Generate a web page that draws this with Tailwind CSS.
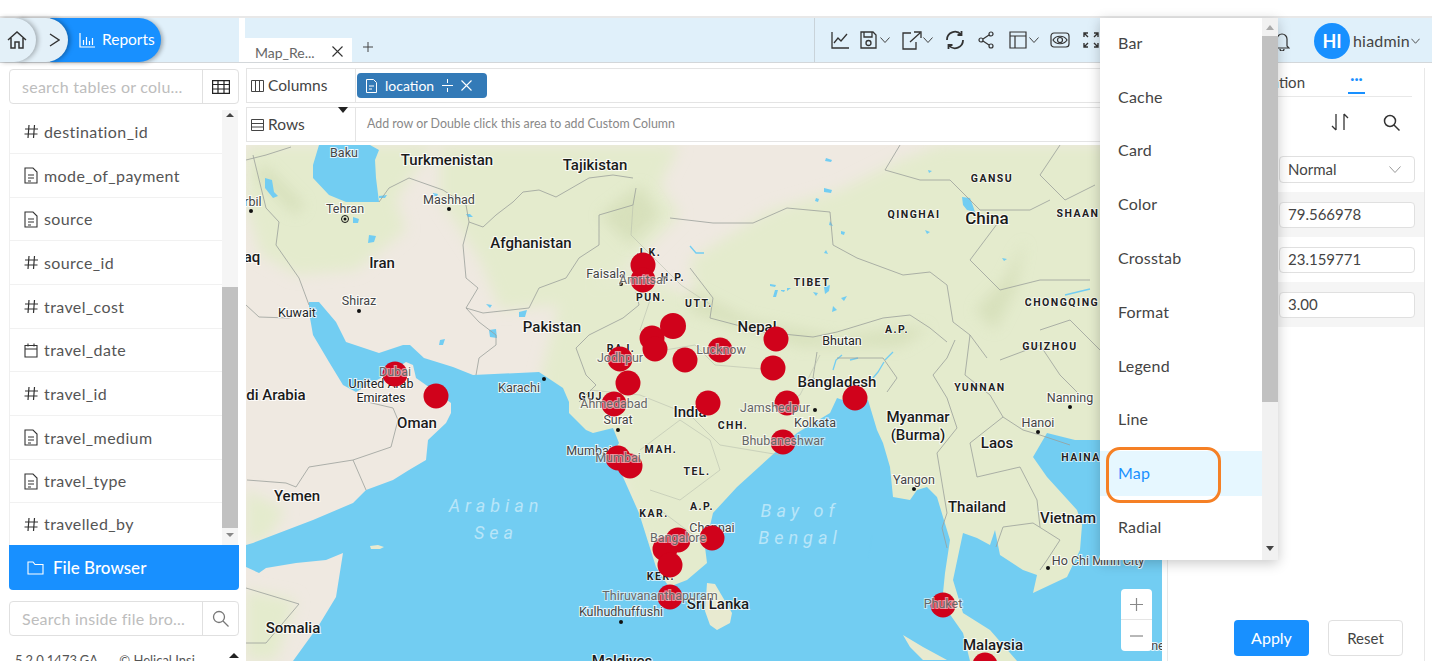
<!DOCTYPE html>
<html lang="en">
<head>
<meta charset="UTF-8">
<title>Reports - Map</title>
<script src="https://cdn.jsdelivr.net/npm/@tailwindcss/browser@4"></script>
</head>
<body class="relative w-[1432px] h-[661px] overflow-hidden bg-white font-['Lato',sans-serif] text-[#555]">

<div class="h-[18px] border-b-2 border-[#e8e8e8]"></div>

<!-- top bar -->
<header class="flex h-[45px] border-b border-[#d3d7da]">
  <div class="w-[239px] bg-[#e0f0fa] flex items-center">
    <div class="relative z-20 w-[36px] h-[44px] rounded-r-full bg-[#e3f0f8] shadow-[2px_0_5px_rgba(0,0,0,.3)] flex items-center pl-[7px]">
      <svg class="w-[20px] h-[20px]" viewBox="0 0 20 20" fill="none" stroke="#333" stroke-width="1.5"><path d="M1 10 10 2l9 8M4 8v10h4v-6h4v6h4V8"/></svg>
    </div>
    <div class="relative z-10 -ml-[18px] w-[50px] h-[44px] rounded-r-full bg-[#e3f0f8] shadow-[2px_0_5px_rgba(0,0,0,.35)] flex items-center pl-[31px]">
      <svg class="w-[11px] h-[14px]" viewBox="0 0 11 14" fill="none" stroke="#333" stroke-width="1.4"><path d="m1 1 9 6-9 6"/></svg>
    </div>
    <div class="-ml-[18px] w-[111px] h-[44px] rounded-r-full bg-[#1890ff] shadow-[2px_1px_4px_rgba(0,0,0,.3)] flex items-center pl-[29px] gap-[7px] text-white text-[15.5px]">
      <svg class="w-[16px] h-[15px]" viewBox="0 0 16 15" fill="none" stroke="#fff" stroke-width="1.2"><path d="M1 0v14h15M4.500 12V7M7.500 12V4M10.500 12V8M13.500 12V5"/></svg>
      <span>Reports</span>
    </div>
  </div>
  <div class="w-[6px]"></div>
  <div class="flex-1 bg-[#e0f0fa] flex relative">
    <div class="w-[107px] h-[24px] mt-[20px] bg-white flex items-center pt-[4px] pl-[10px] pr-[9px] justify-between text-[14px] text-[#666]">
      <span>Map_Re...</span>
      <svg class="w-[11px] h-[11px] -mt-[2px]" viewBox="0 0 11 11" stroke="#333" stroke-width="1.1"><path d="m.5.5 10 10M10.5.5l-10 10"/></svg>
    </div>
    <div class="w-[18px] h-[18px] mt-[20px] ml-[7px] flex items-center justify-center">
      <svg class="w-[10px] h-[10px]" viewBox="0 0 10 10" stroke="#444" stroke-width="1"><path d="M5 0v10M0 5h10"/></svg>
    </div>
    <div class="ml-[437px] w-px h-full bg-[#c9d3d9]"></div>
    <div class="flex items-center h-full pl-[16px]">
      <svg class="w-[18px] h-[18px]" viewBox="0 0 18 18" fill="none" stroke="#333" stroke-width="1.3"><path d="M1 1v16h17M3 12l4-5 3 3 6-7"/></svg>
      <svg class="ml-[11px] w-[17px] h-[18px]" viewBox="0 0 17 18" fill="none" stroke="#333" stroke-width="1.3"><path d="M1 1h12l3 3v13H1zM4 1v5h8V1"/><circle cx="8.5" cy="12" r="2.5"/></svg>
      <svg class="ml-[3px] w-[10px] h-[6px]" viewBox="0 0 10 6" fill="none" stroke="#444"><path d="m.5.5 4.5 5 4.5-5"/></svg>
      <svg class="ml-[12px] w-[20px] h-[19px]" viewBox="0 0 20 19" fill="none" stroke="#333" stroke-width="1.3"><path d="M9 2H1v16h13v-7M8 11l10-9M12 1h7v6"/></svg>
      <svg class="ml-[1px] w-[10px] h-[6px]" viewBox="0 0 10 6" fill="none" stroke="#444"><path d="m.5.5 4.5 5 4.5-5"/></svg>
      <svg class="ml-[12px] w-[20px] h-[20px]" viewBox="0 0 20 20" fill="none" stroke="#333" stroke-width="1.8"><path d="M2 10a8 8 0 0 1 14-5.500M18 10a8 8 0 0 1-14 5.500M16.500 1v4h-4M3.500 19v-4h4"/></svg>
      <svg class="ml-[13px] w-[16px] h-[18px]" viewBox="0 0 16 18" fill="none" stroke="#333" stroke-width="1.2"><circle cx="13" cy="3" r="2"/><circle cx="3" cy="9" r="2"/><circle cx="13" cy="15" r="2"/><path d="m5 8 6-4M5 10l6 4"/></svg>
      <svg class="ml-[15px] w-[18px] h-[18px]" viewBox="0 0 18 18" fill="none" stroke="#333" stroke-width="1.2"><path d="M1 1h16v16H1zM1 5h16M6 5v12"/></svg>
      <svg class="ml-[2px] w-[10px] h-[6px]" viewBox="0 0 10 6" fill="none" stroke="#444"><path d="m.5.5 4.5 5 4.5-5"/></svg>
      <svg class="ml-[11px] w-[20px] h-[16px]" viewBox="0 0 20 16" fill="none" stroke="#333" stroke-width="1.2"><rect x="1" y="1" width="18" height="14" rx="3"/><path d="M3 8c3-5 11-5 14 0-3 5-11 5-14 0z"/><circle cx="10" cy="8" r="2.5"/></svg>
      <svg class="ml-[13px] w-[16px] h-[16px]" viewBox="0 0 16 16" fill="none" stroke="#333" stroke-width="1.4"><path d="M1 5V1h4M11 1h4v4M1 11v4h4M11 15h4v-4M1 1l4 4M15 1l-4 4M1 15l4-4M15 15l-4-4"/></svg>
    </div>
    <div class="absolute right-[12px] top-[5px] flex items-center">
      <svg class="mr-[24px] w-[16px] h-[20px]" viewBox="0 0 16 20" fill="none" stroke="#333" stroke-width="1.2"><path d="M3 15V8a5 5 0 0 1 10 0v7l2 2H1zM6 18a2 2 0 0 0 4 0"/></svg>
      <div class="w-[36px] h-[36px] rounded-full bg-[#1890ff] text-white font-bold text-[18px] flex items-center justify-center">HI</div>
      <span class="ml-[3px] text-[16px] tracking-[.2px] text-[#444]">hiadmin</span>
      <svg class="ml-[1px] w-[9px] h-[6px]" viewBox="0 0 10 6" fill="none" stroke="#444"><path d="m.5.5 4.5 5 4.500-5"/></svg>
    </div>
  </div>
</header>

<main class="flex h-[598px]">
  <!-- left column -->
  <aside class="w-[246px] pl-[9px] pr-[7px] pt-[6px] flex flex-col">
    <div class="shrink-0 flex h-[35px] border border-[#e0e0e0] rounded-sm">
      <div class="flex-1 flex items-center pl-[12px] text-[16px] tracking-[.25px] text-[#bdbdbd] whitespace-nowrap">search tables or colu...</div>
      <div class="w-[36px] border-l border-[#e0e0e0] flex items-center justify-center">
        <svg class="w-[18px] h-[14px]" viewBox="0 0 18 14" fill="none" stroke="#222" stroke-width="1.2"><path d="M.6.6h16.800v12.800H.6zM.6 4.500h16.800M.6 9h16.800M6 .6v12.800M12 .6v12.800"/></svg>
      </div>
    </div>
    <div class="shrink-0 mt-[6px] h-[435px] flex border-l border-[#efefef]">
      <ul class="w-[212px] text-[16px] tracking-[.4px] text-[#555]">
        <li class="h-[44px] flex items-center gap-[6px] pl-[14px] border-b border-[#f1f1f1]"><svg class="w-[14px] h-[15px]" viewBox="0 0 14 15" fill="none" stroke="#333" stroke-width="1.2"><path d="M5 1 4 14M10.500 1l-1 13M1 5h13M.5 10h13"/></svg>destination_id</li>
        <li class="h-[44px] flex items-center gap-[6px] pl-[14px] border-b border-[#f1f1f1]"><svg class="w-[14px] h-[17px]" viewBox="0 0 14 17" fill="none" stroke="#333" stroke-width="1.1"><path d="M1 1h8l4 4v11H1zM4 8h6M4 11h6M4 14h3"/></svg>mode_of_payment</li>
        <li class="h-[43px] flex items-center gap-[6px] pl-[14px] border-b border-[#f1f1f1]"><svg class="w-[14px] h-[17px]" viewBox="0 0 14 17" fill="none" stroke="#333" stroke-width="1.1"><path d="M1 1h8l4 4v11H1zM4 8h6M4 11h6M4 14h3"/></svg>source</li>
        <li class="h-[44px] flex items-center gap-[6px] pl-[14px] border-b border-[#f1f1f1]"><svg class="w-[14px] h-[15px]" viewBox="0 0 14 15" fill="none" stroke="#333" stroke-width="1.2"><path d="M5 1 4 14M10.500 1l-1 13M1 5h13M.5 10h13"/></svg>source_id</li>
        <li class="h-[44px] flex items-center gap-[6px] pl-[14px] border-b border-[#f1f1f1]"><svg class="w-[14px] h-[15px]" viewBox="0 0 14 15" fill="none" stroke="#333" stroke-width="1.2"><path d="M5 1 4 14M10.500 1l-1 13M1 5h13M.5 10h13"/></svg>travel_cost</li>
        <li class="h-[43px] flex items-center gap-[6px] pl-[14px] border-b border-[#f1f1f1]"><svg class="w-[14px] h-[15px]" viewBox="0 0 14 15" fill="none" stroke="#333" stroke-width="1.1"><path d="M1 2.500h12V14H1zM1 6h12M4 .5v3M10 .5v3"/></svg>travel_date</li>
        <li class="h-[44px] flex items-center gap-[6px] pl-[14px] border-b border-[#f1f1f1]"><svg class="w-[14px] h-[15px]" viewBox="0 0 14 15" fill="none" stroke="#333" stroke-width="1.2"><path d="M5 1 4 14M10.500 1l-1 13M1 5h13M.5 10h13"/></svg>travel_id</li>
        <li class="h-[44px] flex items-center gap-[6px] pl-[14px] border-b border-[#f1f1f1]"><svg class="w-[14px] h-[17px]" viewBox="0 0 14 17" fill="none" stroke="#333" stroke-width="1.1"><path d="M1 1h8l4 4v11H1zM4 8h6M4 11h6M4 14h3"/></svg>travel_medium</li>
        <li class="h-[43px] flex items-center gap-[6px] pl-[14px] border-b border-[#f1f1f1]"><svg class="w-[14px] h-[17px]" viewBox="0 0 14 17" fill="none" stroke="#333" stroke-width="1.1"><path d="M1 1h8l4 4v11H1zM4 8h6M4 11h6M4 14h3"/></svg>travel_type</li>
        <li class="h-[42px] flex items-center gap-[6px] pl-[14px]"><svg class="w-[14px] h-[15px]" viewBox="0 0 14 15" fill="none" stroke="#333" stroke-width="1.2"><path d="M5 1 4 14M10.500 1l-1 13M1 5h13M.5 10h13"/></svg>travelled_by</li>
      </ul>
      <div class="w-[16px] bg-[#f5f5f5] flex flex-col items-center">
        <div class="mt-[3px] w-0 h-0 border-x-[4px] border-x-transparent border-b-[4px] border-b-[#444]"></div>
        <div class="mt-[170px] w-full h-[241px] bg-[#c1c1c1]"></div>
        <div class="mt-[5px] w-0 h-0 border-x-[4px] border-x-transparent border-t-[4px] border-t-[#888]"></div>
      </div>
    </div>
    <div class="shrink-0 h-[45px] bg-[#1890ff] rounded-b-sm flex items-center pl-[18px] gap-[9px] text-white text-[17px] font-medium">
      <svg class="w-[17px] h-[14px]" viewBox="0 0 17 14" fill="none" stroke="#fff" stroke-width="1.1"><path d="M1 13V1h5l2 2.500h8V13z"/></svg>
      File Browser
    </div>
    <div class="shrink-0 mt-[11px] flex h-[35px] border border-[#e0e0e0] rounded-sm">
      <div class="flex-1 flex items-center pl-[12px] text-[16px] tracking-[.25px] text-[#bdbdbd] whitespace-nowrap">Search inside file bro...</div>
      <div class="w-[36px] border-l border-[#e0e0e0] flex items-center justify-center">
        <svg class="w-[17px] h-[17px]" viewBox="0 0 17 17" fill="none" stroke="#777" stroke-width="1.3"><circle cx="7" cy="7" r="5.500"/><path d="m11 11 5.500 5.500"/></svg>
      </div>
    </div>
    <div class="shrink-0 mt-[15px] h-[20px] flex items-center pl-[6px] text-[13px] text-[#555] whitespace-nowrap">
      <span class="w-[109px]">5.2.0.1473.GA</span><span>© Helical Insi...</span>
      <div class="ml-[25px] -mt-[12px] w-0 h-0 border-x-[5px] border-x-transparent border-b-[5px] border-b-[#222]"></div>
    </div>
  </aside>

  <!-- centre column -->
  <section class="w-[921px] flex flex-col pt-[5px] pr-[5px]">
    <div class="shrink-0 h-[35px] flex border border-[#e4e4e4] text-[15.5px] text-[#444]">
      <div class="w-[109px] flex items-center pl-[4px] gap-[4px] border-r border-[#e4e4e4]">
        <svg class="w-[13px] h-[12px]" viewBox="0 0 13 12" fill="none" stroke="#444"><path d="M.5.5h12v11H.5zM4.500.5v11M8.500.5v11"/></svg>
        Columns
      </div>
      <div class="ml-px mt-[4px] w-[130px] h-[25px] rounded-sm bg-[#337ab7] flex items-center pl-[9px] text-[14px] text-white">
        <svg class="w-[11px] h-[14px]" viewBox="0 0 11 14" fill="none" stroke="#fff"><path d="M.5.5h7l3 3v10H.5zM3 7h5M3 10h3"/></svg>
        <span class="ml-[8px]">location</span>
        <svg class="ml-[8px] w-[11px] h-[13px]" viewBox="0 0 11 13" fill="none" stroke="#fff"><path d="M0 6.500h11M5.500 0v4M5.500 9v4"/></svg>
        <svg class="ml-[8px] w-[11px] h-[11px]" viewBox="0 0 11 11" stroke="#fff" stroke-width="1.1"><path d="m.5.5 10 10M10.500.5l-10 10"/></svg>
      </div>
    </div>
    <div class="shrink-0 relative mt-[4px] h-[35px] flex border border-[#e4e4e4] text-[15.5px] text-[#444]">
      <div class="w-[109px] flex items-center pl-[4px] gap-[4px] border-r border-[#e4e4e4]">
        <svg class="w-[13px] h-[12px]" viewBox="0 0 13 12" fill="none" stroke="#444"><path d="M.5.5h12v11H.5zM.5 4.500h12M.5 8h12"/></svg>
        Rows
      </div>
      <div class="pl-[11px] flex items-center text-[12.4px] text-[#888]">Add row or Double click this area to add Custom Column</div>
      <div class="absolute left-[91px] -top-px w-0 h-0 border-x-[5.5px] border-x-transparent border-t-[6px] border-t-[#222]"></div>
    </div>

    <!-- map -->
    <div class="relative shrink-0 mt-[3px] w-[916px] h-[516px] overflow-hidden">
      <svg class="block w-[916px] h-[516px] font-['Roboto',sans-serif]" viewBox="246 145 916 516">
        <defs><filter id="soft"><feGaussianBlur stdDeviation="7"/></filter></defs>
        <rect x="246" y="145" width="916" height="516" fill="#efe9e1"/>
        <!-- vegetation -->
        <g fill="#e4ebcd" filter="url(#soft)">
          <path d="M246 145h190l-20 25-20 30 10 30-50 40-60 5-35-20-15-50z"/>
          <path d="M440 145h240l-20 40 20 30-50 50-70 40-60 5-20-50-40-60z"/>
          <path d="M560 300l70-30 70 30 110 40 40 40 50 40-60 60-70 40-40 40-20 60h-40l-30-80-20-70-60-40-20-50z"/>
          <path d="M690 260l80-50 70-20 60-30 40-15h220v310l-50 60-40 90-60 40-60 60-30-60-30-100-30-60-60-90-100-60z"/>
          <path d="M246 590l50 10-20 60h-30zM246 490l40 20-20 30-20 5z"/>
          <path d="M880 400h220v280H900z"/>
          <path d="M620 480h100l-10 120h-50z"/>
        </g>
        <g fill="#cdd8ae" opacity=".55" filter="url(#soft)">
          <path d="M690 290l60 30 90 18 60-10 30 0-30 18-100 0-110-35z"/>
          <path d="M975 310l30-30 20-40-10 50-20 40z"/>
          <path d="M600 215l40-30 20 30-30 30z"/>
          <path d="M265 165l40 40-10 10-40-40z"/>
        </g>
        <!-- sea -->
        <path fill="#72cdf2" d="M319 145L370 145L379 150L375 160L376 178L379 202L346 202L329 195L313 178L313 165Z"/>
        <path fill="#72cdf2" d="M309 302L319 302L336 322L346 342L379 353L403 345L410 345L424 358L453 367L473 375L539 372L563 388L569 402L569 413L586 430L593 433L613 428L619 443L616 448L623 477L639 513L656 567L669 587L687 580L707 563L705 547L713 513L737 487L770 457L797 433L830 413L837 398L857 405L868 400L877 430L883 443L890 467L893 497L910 500L917 490L927 487L937 497L943 517L950 540L945 573L942 603L963 633L970 661L293 661L319 625L336 597L343 553L326 560L296 563L266 568L259 573L246 567L246 545L253 543L313 520L353 503L366 490L393 480L409 470L426 460L428 440L446 423L451 413L451 403L436 392L416 378L413 365L406 362L386 375L356 392L343 385L329 362L313 335L309 312Z"/>
        <path fill="#72cdf2" d="M1017 661L990 630L963 613L953 580L960 547L963 533L977 538L990 545L995 530L1000 555L1023 570L1037 575L1033 593L1067 577L1080 550L1082 525L1077 510L1047 477L1033 457L1047 433L1075 440L1100 440L1162 445L1162 661Z"/>
        <path fill="#e8ead0" d="M707 583l8 1 17 29-2 10-13 7-7-5-5-14zM903 635l20 12 24 13h-24l-13-13zM370 546l8-1 6 2-4 2h-9z"/>
        <!-- lakes -->
        <g fill="#72cdf2">
          <path d="M265 178l7 2 2 12 4 4-5 2-8-10zM353 217l6 2-1 4-5 0zM369 235l7 1-2 6-6 1zM433 193l5 1-1 2-4 0zM379 196l8-1-2 3-6 0zM470 214l-4 0 2 3 5 0zM492 305l-6-1 4 4zM519 312l8-2-2 7-6 0zM489 330l7-1 1 9-7-1zM440 340l5-1-2 6-4 0z"/>
          <path d="M962 197l8 1 3 8 2 6-8-2-4-5zM826 158l6 2-1 2-6-1zM824 188l8 2-1 3-7-1zM816 198l3 1-1 3-3-1zM824 287l6-2-1 6-4 3zM770 284l6 1-1 2-5-1zM781 290l4 0-1 2-3-1zM778 290l-2 7-3 0 2-7zM787 288l4 0-4 3zM813 292l5 1-2 3zM841 298l6-2-3 5zM833 306l4 4-5 2zM841 231l4 1-1 3-3-1zM830 221l3 5-4-1zM826 250l2 4-4-1zM925 230l5 2-3 2zM928 170l4 1-3 2zM1002 258l5 1-3 2z"/>
        </g>
        <g fill="none" stroke="#72cdf2" stroke-width="1.3">
          <path d="M833 370l3-10 6-5M850 360l8-2M884 362l-6 10-5 6M893 352l-8 8M1065 295l25-6"/>
          <path d="M690 246l6 7 8 0M872 535l-2 14-2 10"/>
        </g>
        <!-- borders -->
        <g fill="none" stroke="#9aa09a" stroke-width=".8">
          <path d="M379 202l10-14 20-10 34 12 23 15 3 17 14 5 13-12 17-13 10-10 16-2 17 7 33-19 24-3 20 3"/>
          <path d="M469 222l-6 23 3 33 12 10-12 20 13 14 17 13v10l-17 13-3 17"/>
          <path d="M466 308l17 5 46-5 10-20 27-10 13-20 20-13v-30l34-10 3-17"/>
          <path d="M253 155l13 53 13 14-3 23 23 33 10 27M246 305l13 12 30 1 14-6M246 160l20-5 25-8"/>
          <path d="M636 292l3 13-16 13-34 17-13 13 10 27 10 10-17 17"/>
          <path d="M670 218l43 5h40l34-15 43 4 3 33 24 13 46 17 27-3 17 13 6 37 17 13 17 23"/>
          <path d="M690 268l23 30-3 20 53 14 50 5 24-5 46-14 27-3 20 13 17 14"/>
          <path d="M947 358l-14 17 14 23 10 30-20 25 5 30 5 30-5 15 5 20M955 340l-8 18M970 335l-5 40 25 20 13 22 20 13 17 5 30 10"/>
          <path d="M1003 527l30-4 27 17-13 20-7 10M970 443l7 34 43-10 17 33 3 27M1003 417l-33 26M1003 527l-7 20"/>
          <path d="M247 480l39 3 10 4 13-20 44-7 38-13 7-27-5-12-34-8M353 460l13 30"/>
          <path d="M246 588l53 16-33 39h-20"/>
          <path d="M817 352l-4 26 20 7M837 358h46l14 20-10 14"/>
          <path d="M1060 145l-20 30 25 25 30-15M900 145l-15 25 35 10 30 0 30 30 50 0 20-10M1000 220l-30 40 30 30 40-10 50 0M1040 330l30-10 30 30M1000 360l40-15 20 30 20 20"/>
        </g>
        <g fill="none" stroke="#b9bfae" stroke-width=".6">
          <path d="M633 205l-2 30 20 20 30 30 30 20M650 300l-10 30 25 20 30-5 20 20 60 5M590 390l50 5 50 20 30 30 60 10M640 450l40-30 30 20 10 30-40 30-30-10M660 510l40 30M820 355l-20 40-20 10"/>
        </g>
        <!-- place dots -->
        <g fill="#111">
          <circle cx="251" cy="211" r="2"/><circle cx="449" cy="209" r="2"/><circle cx="359" cy="311" r="2"/><circle cx="544" cy="379" r="2"/>
          <circle cx="618" cy="430" r="2"/><circle cx="621" cy="622" r="2"/><circle cx="914" cy="489" r="2"/><circle cx="1038" cy="432" r="2"/>
          <circle cx="1048" cy="568" r="2"/><circle cx="621" cy="284" r="2"/><circle cx="1070" cy="407" r="2"/><circle cx="815" cy="410" r="2"/>
          <circle cx="345" cy="219" r="3.5" fill="none" stroke="#111"/><circle cx="345" cy="219" r="1.5"/>
        </g>
        <!-- country labels -->
        <g class="fill-[#1b1b1b] stroke-white/80 stroke-[2px] [paint-order:stroke] font-medium text-[15px]" text-anchor="middle" dominant-baseline="central">
          <text x="447" y="160">Turkmenistan</text><text x="595" y="165">Tajikistan</text><text x="531" y="243">Afghanistan</text>
          <text x="382" y="263">Iran</text><text x="552" y="327">Pakistan</text><text x="987" y="218" class="text-[17px]">China</text>
          <text x="757" y="327">Nepal</text><text x="837" y="382">Bangladesh</text><text x="690" y="412">India</text>
          <text x="417" y="423">Oman</text><text x="297" y="496">Yemen</text><text x="977" y="507">Thailand</text>
          <text x="1068" y="518">Vietnam</text><text x="997" y="443">Laos</text><text x="918" y="417">Myanmar</text><text x="918" y="435">(Burma)</text>
          <text x="993" y="645">Malaysia</text><text x="718" y="604">Sri Lanka</text><text x="293" y="628">Somalia</text><text x="622" y="661">Maldives</text>
          <text x="276" y="395">di Arabia</text><text x="252" y="257">aq</text>
        </g>
        <!-- city labels -->
        <g class="fill-[#444] stroke-white/80 stroke-[2px] [paint-order:stroke] text-[12.5px]" text-anchor="middle" dominant-baseline="central">
          <text x="344" y="152">Baku</text><text x="345" y="208">Tehran</text><text x="449" y="199">Mashhad</text><text x="359" y="300">Shiraz</text>
          <text x="297" y="312" class="fill-[#222]">Kuwait</text><text x="381" y="383" class="fill-[#222]">United Arab</text><text x="381" y="397" class="fill-[#222]">Emirates</text>
          <text x="519" y="387">Karachi</text><text x="606" y="273">Faisala</text><text x="618" y="419">Surat</text><text x="589" y="450">Mumbai</text>
          <text x="815" y="422">Kolkata</text><text x="712" y="527">Chennai</text><text x="621" y="611">Kulhudhuffushi</text><text x="914" y="479">Yangon</text>
          <text x="1038" y="422">Hanoi</text><text x="1098" y="560">Ho Chi Minh City</text><text x="842" y="340" class="fill-[#222]">Bhutan</text>
          <text x="1070" y="397">Nanning</text><text x="253" y="201">rbil</text><text x="1158" y="645">ne</text>
        </g>
        <!-- state labels -->
        <g class="fill-[#222] stroke-white/80 stroke-[1.5px] [paint-order:stroke] font-bold text-[10.5px] tracking-[1.5px]" text-anchor="middle" dominant-baseline="central">
          <text x="992" y="178">GANSU</text><text x="914" y="214">QINGHAI</text><text x="1078" y="213">SHAAN</text><text x="812" y="282">TIBET</text>
          <text x="1062" y="302">CHONGQING</text><text x="1050" y="346">GUIZHOU</text><text x="980" y="387">YUNNAN</text><text x="699" y="303">UTT.</text>
          <text x="897" y="329">A.P.</text><text x="649" y="252">J.K.</text><text x="673" y="277">H.P.</text><text x="651" y="297">PUN.</text>
          <text x="621" y="348">RAJ.</text><text x="593" y="396">GUJ.</text><text x="733" y="425">CHH.</text><text x="661" y="449">MAH.</text>
          <text x="697" y="471">TEL.</text><text x="702" y="506">A.P.</text><text x="654" y="513">KAR.</text><text x="661" y="576">KER.</text><text x="1081" y="457">HAINA</text>
        </g>
        <!-- seas -->
        <g class="fill-white/50 italic text-[18px] tracking-[5px]" text-anchor="middle" dominant-baseline="central">
          <text x="496" y="505">Arabian</text><text x="496" y="532">Sea</text><text x="800" y="510">Bay of</text><text x="800" y="537">Bengal</text>
        </g>
        <!-- data points -->
        <g fill="#d0021b">
          <circle cx="643" cy="265" r="12.5"/><circle cx="643" cy="280" r="12.5"/><circle cx="652" cy="338" r="12.5"/><circle cx="673" cy="326" r="13"/>
          <circle cx="655" cy="349" r="12.5"/><circle cx="685" cy="360" r="12.5"/><circle cx="720" cy="350" r="12.5"/><circle cx="776" cy="339" r="12.5"/>
          <circle cx="773" cy="368" r="12.5"/><circle cx="620" cy="359" r="12.5"/><circle cx="628" cy="383" r="12.5"/><circle cx="614" cy="404" r="12.5"/>
          <circle cx="708" cy="403" r="12.5"/><circle cx="787" cy="403" r="12.5"/><circle cx="855" cy="398" r="12.5"/><circle cx="395" cy="374" r="12.5"/>
          <circle cx="436" cy="396" r="12.5"/><circle cx="618" cy="458" r="12.5"/><circle cx="630" cy="466" r="12.5"/><circle cx="783" cy="442" r="12.5"/>
          <circle cx="678" cy="540" r="12.5"/><circle cx="712" cy="538" r="12.5"/><circle cx="665" cy="549" r="12.5"/><circle cx="670" cy="565" r="12.5"/>
          <circle cx="670" cy="597" r="12.5"/><circle cx="943" cy="605" r="12.5"/><circle cx="985" cy="665" r="12.5"/>
        </g>
        <g class="fill-[#666] stroke-white/55 stroke-[2px] [paint-order:stroke] text-[12.5px]" text-anchor="middle" dominant-baseline="central">
          <text x="643" y="279">Amritsar</text><text x="620" y="357">Jodhpur</text><text x="721" y="349">Lucknow</text><text x="395" y="371">Dubai</text>
          <text x="614" y="403">Ahmedabad</text><text x="775" y="407">Jamshedpur</text><text x="618" y="457">Mumbai</text><text x="783" y="440">Bhubaneshwar</text>
          <text x="678" y="537">Bangalore</text><text x="660" y="595">Thiruvananthapuram</text><text x="943" y="603">Phuket</text>
        </g>
      </svg>
      <div class="absolute left-[875px] top-[444px] w-[31px] h-[62px] bg-white rounded-sm flex flex-col divide-y divide-[#e5e5e5]">
        <div class="h-[31px] flex items-center justify-center"><svg class="w-[13px] h-[13px]" viewBox="0 0 13 13" stroke="#888" stroke-width="1.2"><path d="M6.500 0v13M0 6.500h13"/></svg></div>
        <div class="h-[31px] flex items-center justify-center"><svg class="w-[13px] h-[2px]" viewBox="0 0 13 2" stroke="#888" stroke-width="1.2"><path d="M0 1h13"/></svg></div>
      </div>
    </div>
  </section>

  <!-- right panel -->
  <section class="relative w-[258px] mt-[5px] border-l border-r border-[#e8e8e8] text-[15px] text-[#444]">
    <div class="h-[29px] mr-[12px] border-b border-[#e8e8e8] flex items-start pt-[3px] justify-end">
      <span class="mr-[43px]">Location</span>
      <div class="relative w-[17px] h-[26px] -mt-[3px] mr-[47px] text-center text-[#1890ff] font-bold leading-[20px] border-b-2 border-[#1890ff]">···</div>
    </div>
    <div class="h-[50px] mr-[12px] flex items-center justify-end pr-[12px] gap-[34px]">
      <svg class="w-[18px] h-[18px]" viewBox="0 0 18 18" fill="none" stroke="#333" stroke-width="1.3"><path d="M5 1v16M1 13l4 4M13 17V1M13 1l4 4"/></svg>
      <svg class="w-[17px] h-[17px]" viewBox="0 0 17 17" fill="none" stroke="#333" stroke-width="1.5"><circle cx="7" cy="7" r="5.5"/><path d="m11 11 5.500 5.500"/></svg>
    </div>
    <div class="h-[45px] flex items-center justify-end pr-[9px]">
      <div class="w-[136px] h-[27px] border border-[#e0e0e0] rounded-sm flex items-center justify-between pl-[8px] pr-[13px]">
        Normal
        <svg class="w-[12px] h-[7px]" viewBox="0 0 12 7" fill="none" stroke="#999"><path d="m.5.5 5.500 6 5.500-6"/></svg>
      </div>
    </div>
    <div class="h-[45px] bg-[#f5f5f5] flex items-center justify-end pr-[9px]"><div class="w-[136px] h-[26px] bg-white border border-[#e0e0e0] rounded-sm flex items-center pl-[8px]">79.566978</div></div>
    <div class="h-[45px] flex items-center justify-end pr-[9px]"><div class="w-[136px] h-[26px] bg-white border border-[#e0e0e0] rounded-sm flex items-center pl-[8px]">23.159771</div></div>
    <div class="h-[45px] bg-[#f5f5f5] flex items-center justify-end pr-[9px]"><div class="w-[136px] h-[26px] bg-white border border-[#e0e0e0] rounded-sm flex items-center pl-[8px]">3.00</div></div>
    <div class="absolute left-[66px] top-[552px] flex gap-[19px]">
      <div class="w-[75px] h-[36px] bg-[#1890ff] text-white rounded-sm flex items-center justify-center text-[16px]">Apply</div>
      <div class="w-[75px] h-[36px] bg-white border border-[#e0e0e0] rounded-sm flex items-center justify-center">Reset</div>
    </div>
  </section>
</main>

<!-- chart type menu -->
<div class="absolute left-[1100px] top-[18px] w-[178px] h-[542px] bg-white shadow-[0_3px_12px_rgba(0,0,0,.22)] flex text-[16px] tracking-[.2px] text-[#444]">
  <ul class="w-[162px] -mt-[2px]">
    <li class="h-[53.8px] flex items-center pl-[18px]">Bar</li>
    <li class="h-[53.8px] flex items-center pl-[18px]">Cache</li>
    <li class="h-[53.8px] flex items-center pl-[18px]">Card</li>
    <li class="h-[53.8px] flex items-center pl-[18px]">Color</li>
    <li class="h-[53.8px] flex items-center pl-[18px]">Crosstab</li>
    <li class="h-[53.8px] flex items-center pl-[18px]">Format</li>
    <li class="h-[53.8px] flex items-center pl-[18px]">Legend</li>
    <li class="h-[53.8px] flex items-center pl-[18px]">Line</li>
    <li class="h-[53.8px] flex items-center text-[#1890ff]"><span class="flex items-center w-[162px] h-[45px] pl-[18px] bg-[#e6f7ff]">Map</span></li>
    <li class="h-[53.8px] flex items-center pl-[18px]">Radial</li>
  </ul>
  <div class="w-[16px] bg-[#f1f1f1] flex flex-col items-center">
    <div class="mt-[7px] w-0 h-0 border-x-[4px] border-x-transparent border-b-[5px] border-b-[#aaa]"></div>
    <div class="mt-[6px] w-full h-[366px] bg-[#c1c1c1]"></div>
    <div class="mt-[144px] w-0 h-0 border-x-[4px] border-x-transparent border-t-[5px] border-t-[#444]"></div>
  </div>
</div>
<div class="absolute left-[1106px] top-[447px] w-[115px] h-[56px] rounded-[14px] border-[3px] border-[#f58025]"></div>

</body>
</html>
